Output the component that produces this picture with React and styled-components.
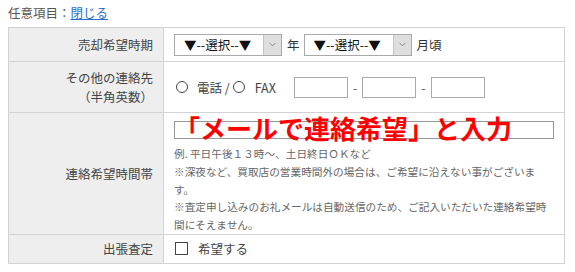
import React from 'react'
import styled, { createGlobalStyle } from 'styled-components'
import { ChevronDown } from 'lucide-react'

const GlobalStyle = createGlobalStyle`
  body {
    margin: 4px 8px 0;
    background: #fff;
    color: #444;
    font-family: "Noto Sans CJK JP", "Noto Sans", sans-serif;
    font-size: 12.5px;
  }
`

const TopLine = styled.div`
  height: 18px;
  line-height: 18px;
  color: #555;
  margin-bottom: 5px;

  a {
    color: #2a6fc9;
    text-decoration: underline;
  }
`

const Table = styled.table`
  width: 557px;
  border-collapse: collapse;
  border: 1px solid #cfcfcf;
`

const Row = styled.tr`
  height: ${(p) => p.h}px;
`

const Head = styled.th`
  width: 147px;
  background: #eeeeee;
  border: 1px solid #d2d2d2;
  text-align: right;
  font-weight: normal;
  color: #444;
  padding: 0 10px 0 0;
  line-height: 19px;
  vertical-align: middle;
`

const Cell = styled.td`
  border: 1px solid #d2d2d2;
  padding: ${(p) => p.pad || '0 10px'};
  vertical-align: ${(p) => p.valign || 'middle'};
`

const Inline = styled.div`
  display: flex;
  align-items: center;
`

const Select = styled.div`
  display: flex;
  align-items: stretch;
  width: 106px;
  height: 20px;
  border: 1px solid #a9a9a9;
  background: #fff;
  color: #111;
`

const SelectLabel = styled.span`
  flex: 1;
  padding-left: 9px;
  line-height: 20px;
`

const SelectArrow = styled.span`
  width: 17px;
  display: flex;
  align-items: center;
  justify-content: center;
  background: #dedede;
  border-left: 1px solid #c4c4c4;
`

const Unit = styled.span`
  margin: 0 4px 0 5px;
  color: #333;
`

const Radio = styled.span`
  width: 10px;
  height: 10px;
  border: 1px solid #444;
  border-radius: 50%;
  margin: 0 ${(p) => p.gap || 9}px 0 ${(p) => p.lead || 1}px;
`

const Label = styled.span`
  margin-right: ${(p) => p.gap || 0}px;
`

const TextBox = styled.span`
  width: 52px;
  height: 19px;
  border: 1px solid #a9a9a9;
  background: #fff;
`

const Dash = styled.span`
  margin: 0 5px;
  color: #555;
`

const FieldWrap = styled.div`
  position: relative;
  height: 16px;
  border: 1px solid #999;
  width: 378px;
  margin-bottom: 6px;
`

const RedNote = styled.span`
  position: absolute;
  left: -1px;
  top: -9px;
  font-size: 26px;
  font-weight: bold;
  color: #ff0000;
  line-height: 30px;
  white-space: nowrap;
`

const Help = styled.p`
  margin: 0;
  width: 375px;
  font-size: 10.65px;
  line-height: 17.8px;
  color: #666;
  text-spacing-trim: space-all;
`

const Check = styled.span`
  width: 11px;
  height: 11px;
  border: 1px solid #444;
  margin: 0 10px 0 1px;
`

function Dropdown() {
  return (
    <Select>
      <SelectLabel>▼--選択--▼</SelectLabel>
      <SelectArrow>
        <ChevronDown size={11} strokeWidth={1.5} color="#666" />
      </SelectArrow>
    </Select>
  )
}

export default function App() {
  return (
    <>
      <GlobalStyle />
      <TopLine>
        任意項目：<a href="#">閉じる</a>
      </TopLine>
      <Table>
        <tbody>
          <Row h={34}>
            <Head>売却希望時期</Head>
            <Cell>
              <Inline>
                <Dropdown />
                <Unit>年</Unit>
                <Dropdown />
                <Unit>月頃</Unit>
              </Inline>
            </Cell>
          </Row>
          <Row h={51}>
            <Head>
              その他の連絡先
              <br />
              （半角英数）
            </Head>
            <Cell>
              <Inline>
                <Radio lead={2} />
                <Label>電話 /</Label>
                <Radio gap={10} lead={3} />
                <Label gap={18}>FAX</Label>
                <TextBox />
                <Dash>-</Dash>
                <TextBox />
                <Dash>-</Dash>
                <TextBox />
              </Inline>
            </Cell>
          </Row>
          <Row h={121}>
            <Head>連絡希望時間帯</Head>
            <Cell valign="top" pad="8px 10px 0">
              <FieldWrap>
                <RedNote>「メールで連絡希望」と入力</RedNote>
              </FieldWrap>
              <Help>例. 平日午後１３時～、土日終日ＯＫなど</Help>
              <Help>※深夜など、買取店の営業時間外の場合は、ご希望に沿えない事がございます。</Help>
              <Help>※査定申し込みのお礼メールは自動送信のため、ご記入いただいた連絡希望時間にそえません。</Help>
            </Cell>
          </Row>
          <Row h={29}>
            <Head>出張査定</Head>
            <Cell>
              <Inline>
                <Check />
                <span>希望する</span>
              </Inline>
            </Cell>
          </Row>
        </tbody>
      </Table>
    </>
  )
}
